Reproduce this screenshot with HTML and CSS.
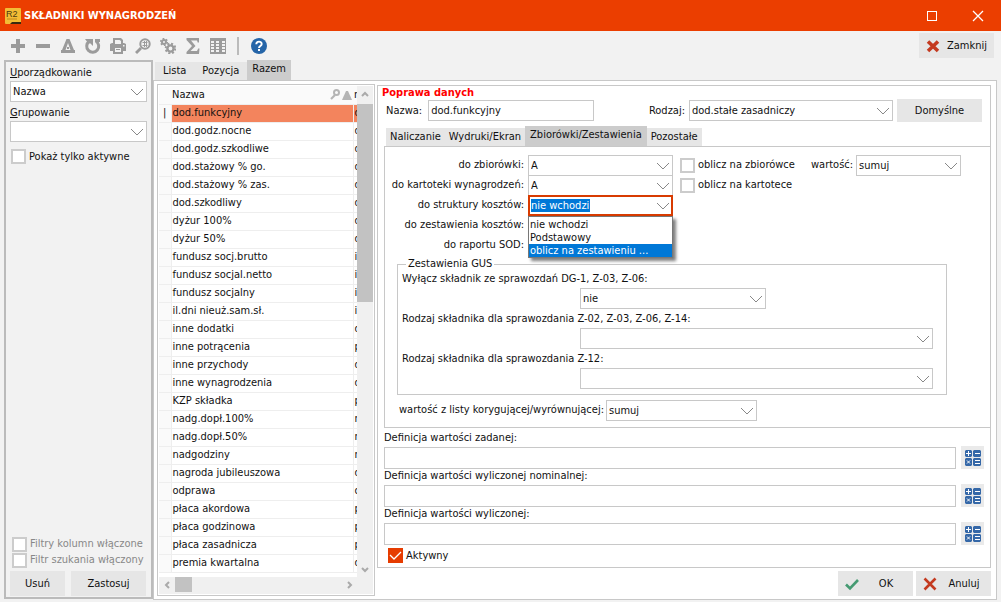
FILE: index.html
```html
<!DOCTYPE html>
<html lang="pl">
<head>
    <meta charset="UTF-8">
    <meta name="viewport" content="width=device-width, initial-scale=1.0">
    <title>Składniki wynagrodzeń</title>
    <link rel="stylesheet" href="styles.css">
</head>
<body>
    <header class="titlebar">
        <svg class="app-icon" viewBox="0 0 16 16">
            <rect width="16" height="16" rx="1" fill="#f3bc35"/>
            <text x="1" y="9" font-size="9" fill="#4a3a10" font-family="Liberation Sans, sans-serif">R2</text>
            <path d="M2 11h10" stroke="#c08a1c"/>
            <path d="M7 14h9v2H5z" fill="#3a2a10"/>
        </svg>
        <h1>SKŁADNIKI WYNAGRODZEŃ</h1>
        <button class="win-btn" aria-label="Maksymalizuj"><svg width="12" height="12"><rect x="1.5" y="1.5" width="9" height="9" fill="none" stroke="#fff"/></svg></button>
        <button class="win-btn" aria-label="Zamknij okno"><svg width="12" height="12"><path d="M1 1l10 10M11 1L1 11" fill="none" stroke="#fff" stroke-width="1.3"/></svg></button>
    </header>

    <nav class="toolbar">
        <button class="tool" aria-label="Dodaj"><svg viewBox="0 0 16 16"><path d="M6 1h4v5h5v4h-5v5H6v-5H1V6h5z"/></svg></button>
        <button class="tool" aria-label="Usuń pozycję"><svg viewBox="0 0 16 16"><path d="M1 6h14v4H1z"/></svg></button>
        <button class="tool" aria-label="Popraw"><svg viewBox="0 0 16 16"><path fill-rule="evenodd" d="M6.500 1h3L14 12h1v3H1v-3h1zM8 5l-2.500 7h5z"/><path d="M7 9h2v2H7z"/></svg></button>
        <button class="tool" aria-label="Odśwież"><svg viewBox="0 0 16 16"><path d="M11 3.200A6 6 0 1 1 4 3.500" fill="none" stroke="#9b9b9b" stroke-width="3"/><path d="M0 1h8v7L5.500 5.500 3 5z"/><path d="M10 1h5v3h-5z"/></svg></button>
        <button class="tool" aria-label="Drukuj"><svg viewBox="0 0 16 16"><path fill-rule="evenodd" d="M3 0h8l2 2v3h1l2 1v7h-3v3H3v-3H0V6l2-1h1zM5 2v4h6V3L9.500 2zM5 10v4h6v-4zM13 7v1.500h1.500V7z"/><path d="M6 11h4v1H6z"/></svg></button>
        <button class="tool" aria-label="Szukaj"><svg viewBox="0 0 16 16"><circle cx="10" cy="6" r="4.700" fill="none" stroke="#9b9b9b" stroke-width="2"/><path d="M0 14l5-5 2 2-5 5zM9 3h1v6H9zM11 3h1v6h-1zM7.500 4h5v1h-5zM7.500 7h5v1h-5z"/></svg></button>
        <button class="tool" aria-label="Ustawienia"><svg viewBox="0 0 16 16"><circle cx="4" cy="4" r="2" fill="none" stroke="#9b9b9b" stroke-width="2"/><circle cx="4" cy="4" r="3.300" fill="none" stroke="#9b9b9b" stroke-width="1.600" stroke-dasharray="1.700 1.750"/><circle cx="10.500" cy="10.500" r="3.100" fill="none" stroke="#9b9b9b" stroke-width="2.400"/><circle cx="10.500" cy="10.500" r="4.800" fill="none" stroke="#9b9b9b" stroke-width="2" stroke-dasharray="2 1.770"/></svg></button>
        <button class="tool" aria-label="Suma"><svg viewBox="0 0 16 16"><path d="M1.500 0H14v4.500h-1.300L12 2.500H6L10.500 8 5.500 13H12l1.200-2.500h1.300L14 16H1.500v-2L7 8 1.500 2z"/></svg></button>
        <button class="tool" aria-label="Kolumny"><svg viewBox="0 0 16 16"><path fill-rule="evenodd" d="M0 0h16v16H0zM1 3v2h3V3zM1 6v2h3V6zM1 9v2h3V9zM1 12v2h3v-2zM6 3v2h3V3zM6 6v2h3V6zM6 9v2h3V9zM6 12v2h3v-2zM12 3v2h3V3zM12 6v2h3V6zM12 9v2h3V9zM12 12v2h3v-2z"/></svg></button>
        <span class="separator"></span>
        <button class="tool" aria-label="Pomoc"><svg viewBox="0 0 16 16"><circle cx="8" cy="8" r="8" fill="#2565a8"/><path d="M5.300 6.200C5.300 2.800 10.700 2.800 10.700 6c0 2-2.700 2-2.700 4" fill="none" stroke="#fff" stroke-width="1.900"/><path d="M7 11h2v2H7z" fill="#fff"/></svg></button>
        <button class="btn close-btn"><svg width="14" height="14" viewBox="0 0 14 14"><path d="M2 2.500l10 9.500M12 2.500L2 12" stroke="#c43a20" stroke-width="3.600"/></svg><span>Zamknij</span></button>
    </nav>

    <div class="workspace">
        <aside class="filters">
            <label for="order"><u>U</u>porządkowanie</label>
            <select id="order"><option>Nazwa</option></select>
            <label for="group"><u>G</u>rupowanie</label>
            <select id="group"><option></option></select>
            <label class="check"><input type="checkbox">Pokaż tylko aktywne</label>
            <div class="filters-bottom">
                <label class="check disabled"><input type="checkbox" disabled>Filtry kolumn włączone</label>
                <label class="check disabled"><input type="checkbox" disabled>Filtr szukania włączony</label>
                <div class="filter-buttons">
                    <button class="btn">Usuń</button>
                    <button class="btn wide">Zastosuj</button>
                </div>
            </div>
        </aside>

        <main class="main">
            <div class="tabs">
                <button class="tab">Lista</button>
                <button class="tab">Pozycja</button>
                <button class="tab active">Razem</button>
            </div>
            <div class="content">
                <section class="list">
                    <div class="list-view">
                        <table>
                            <thead>
                                <tr><th class="mark"></th><th class="name"><div class="head"><span>Nazwa</span><svg width="22" height="12" viewBox="0 0 22 12"><circle cx="6.500" cy="3.500" r="2.500" fill="none" stroke="#b5b5b5" stroke-width="2"/><path d="M1 10l4-4" stroke="#b5b5b5" stroke-width="2.200"/><path d="M16 2h2l4 9H12z" fill="#b5b5b5"/></svg></div></th><th class="type">n</th></tr>
                            </thead>
                            <tbody>
                                <tr class="selected"><td class="mark">|</td><td>dod.funkcyjny</td><td>d</td></tr>
                                <tr><td></td><td>dod.godz.nocne</td><td>d</td></tr>
                                <tr><td></td><td>dod.godz.szkodliwe</td><td>d</td></tr>
                                <tr><td></td><td>dod.stażowy % go.</td><td>d</td></tr>
                                <tr><td></td><td>dod.stażowy % zas.</td><td>d</td></tr>
                                <tr><td></td><td>dod.szkodliwy</td><td>d</td></tr>
                                <tr><td></td><td>dyżur 100%</td><td>d</td></tr>
                                <tr><td></td><td>dyżur 50%</td><td>d</td></tr>
                                <tr><td></td><td>fundusz socj.brutto</td><td>i</td></tr>
                                <tr><td></td><td>fundusz socjal.netto</td><td>i</td></tr>
                                <tr><td></td><td>fundusz socjalny</td><td>i</td></tr>
                                <tr><td></td><td>il.dni nieuż.sam.sł.</td><td>i</td></tr>
                                <tr><td></td><td>inne dodatki</td><td>d</td></tr>
                                <tr><td></td><td>inne potrącenia</td><td>p</td></tr>
                                <tr><td></td><td>inne przychody</td><td>d</td></tr>
                                <tr><td></td><td>inne wynagrodzenia</td><td>d</td></tr>
                                <tr><td></td><td>KZP składka</td><td>p</td></tr>
                                <tr><td></td><td>nadg.dopł.100%</td><td>n</td></tr>
                                <tr><td></td><td>nadg.dopł.50%</td><td>n</td></tr>
                                <tr><td></td><td>nadgodziny</td><td>n</td></tr>
                                <tr><td></td><td>nagroda jubileuszowa</td><td>d</td></tr>
                                <tr><td></td><td>odprawa</td><td>o</td></tr>
                                <tr><td></td><td>płaca akordowa</td><td>p</td></tr>
                                <tr><td></td><td>płaca godzinowa</td><td>p</td></tr>
                                <tr><td></td><td>płaca zasadnicza</td><td>p</td></tr>
                                <tr><td></td><td>premia kwartalna</td><td>d</td></tr>
                            </tbody>
                        </table>
                        <div class="vscroll">
                            <svg width="16" height="16"><path d="M5 10l3-3 3 3"/></svg>
                            <div class="thumb"></div>
                            <svg class="end" width="16" height="16"><path d="M5 7l3 3 3-3"/></svg>
                        </div>
                    </div>
                    <div class="hscroll">
                        <svg width="16" height="16"><path d="M10 5L7 8l3 3"/></svg>
                        <div class="thumb"></div>
                        <svg class="end" width="16" height="16"><path d="M7 5l3 3-3 3"/></svg>
                    </div>
                </section>

                <section class="edit">
                    <form class="form">
                        <h2>Poprawa danych</h2>
                        <div class="top-row">
                            <label for="name">Nazwa:</label>
                            <input type="text" class="name-input" id="name" value="dod.funkcyjny">
                            <label class="push" for="kind">Rodzaj:</label>
                            <select class="kind" id="kind"><option>dod.stałe zasadniczy</option></select>
                            <button type="button" class="btn default-btn">Domyślne</button>
                        </div>
                        <div class="tabs inner">
                            <button type="button" class="tab">Naliczanie</button>
                            <button type="button" class="tab">Wydruki/Ekran</button>
                            <button type="button" class="tab active">Zbiorówki/Zestawienia</button>
                            <button type="button" class="tab">Pozostałe</button>
                        </div>
                        <div class="panel">
                            <div class="row">
                                <label class="lead" for="f1">do zbiorówki:</label>
                                <select class="short" id="f1"><option>A</option></select>
                                <label class="check"><input type="checkbox">oblicz na zbiorówce</label>
                                <label class="value-label" for="f2">wartość:</label>
                                <select class="value" id="f2"><option>sumuj</option></select>
                            </div>
                            <div class="row">
                                <label class="lead" for="f3">do kartoteki wynagrodzeń:</label>
                                <select class="short" id="f3"><option>A</option></select>
                                <label class="check"><input type="checkbox">oblicz na kartotece</label>
                            </div>
                            <div class="row">
                                <label class="lead" for="f4">do struktury kosztów:</label>
                                <div class="dropdown">
                                    <select class="short focused" id="f4"><option>nie wchodzi</option></select>
                                    <ul class="options" role="listbox">
                                        <li role="option">nie wchodzi</li>
                                        <li role="option">Podstawowy</li>
                                        <li role="option" class="current">oblicz na zestawieniu ...</li>
                                    </ul>
                                </div>
                            </div>
                            <div class="row"><span class="lead">do zestawienia kosztów:</span></div>
                            <div class="row"><span class="lead">do raportu SOD:</span></div>
                            <fieldset>
                                <legend>Zestawienia GUS</legend>
                                <label for="g1">Wyłącz składnik ze sprawozdań DG-1, Z-03, Z-06:</label>
                                <select class="half" id="g1"><option>nie</option></select>
                                <label for="g2">Rodzaj składnika dla sprawozdania Z-02, Z-03, Z-06, Z-14:</label>
                                <select id="g2"><option></option></select>
                                <label for="g3">Rodzaj składnika dla sprawozdania Z-12:</label>
                                <select id="g3"><option></option></select>
                            </fieldset>
                            <div class="row last">
                                <label for="f5">wartość z listy korygującej/wyrównującej:</label>
                                <select class="list-value" id="f5"><option>sumuj</option></select>
                            </div>
                        </div>
                        <div class="definitions">
                            <label for="d1">Definicja wartości zadanej:</label>
                            <div class="definition">
                                <input type="text" id="d1">
                                <button type="button" class="calc" aria-label="Kalkulator"><svg width="16" height="16"><use href="#calc"/></svg></button>
                            </div>
                            <label for="d2">Definicja wartości wyliczonej nominalnej:</label>
                            <div class="definition">
                                <input type="text" id="d2">
                                <button type="button" class="calc" aria-label="Kalkulator"><svg width="16" height="16"><use href="#calc"/></svg></button>
                            </div>
                            <label for="d3">Definicja wartości wyliczonej:</label>
                            <div class="definition">
                                <input type="text" id="d3">
                                <button type="button" class="calc" aria-label="Kalkulator"><svg width="16" height="16"><use href="#calc"/></svg></button>
                            </div>
                            <label class="check active-check"><input type="checkbox" checked>Aktywny</label>
                        </div>
                    </form>
                    <div class="actions">
                        <button class="btn"><svg width="14" height="14" viewBox="0 0 14 14"><path d="M1 7.500l4 4L13 3" fill="none" stroke="#459a72" stroke-width="2.600"/></svg><span>OK</span></button>
                        <button class="btn"><svg width="14" height="14" viewBox="0 0 14 14"><path d="M1.500 1.500l11 11M12.500 1.500l-11 11" stroke="#c43a20" stroke-width="2.600"/></svg><span>Anuluj</span></button>
                    </div>
                </section>
            </div>
        </main>
    </div>

    <svg class="sprite">
        <symbol id="calc" viewBox="0 0 16 16">
            <path fill="#3568a8" d="M1 0h5l1 1v5l-1 1H1L0 6V1zM9 0h6l1 1v5l-1 1H9L8 6V1zM1 8h5l1 1v6l-1 1H1l-1-1V9zM9 8h6l1 1v6l-1 1H9l-1-1V9z"/>
            <path fill="none" stroke="#fff" d="M1 3.500h5M3.500 1v5M10 3.500h5M2 10.500l3 3M5 10.500l-3 3M10 10.500h5M10 13.500h5"/>
        </symbol>
    </svg>
</body>
</html>
```
FILE: styles.css
```css
* {
    box-sizing: border-box;
}
body {
    display: flex;
    flex-direction: column;
    min-height: 100vh;
    margin: 0;
    background-color: #f2f2f2;
    color: #111;
    font-family: Tahoma, "DejaVu Sans Condensed", "Noto Sans", sans-serif;
    font-size: 11px;
    line-height: 14px;
    white-space: nowrap;
}
button, input, select {
    font: inherit;
    color: inherit;
    margin: 0;
}
button {
    padding: 0;
    border: none;
    background: none;
}
h1, h2 {
    margin: 0;
    font-size: 11px;
}

/* title bar and toolbar */
.titlebar {
    display: flex;
    align-items: center;
    height: 31px;
    padding-left: 5px;
    background-color: #eb3e00;
    color: #fff;
}
.titlebar h1 {
    flex: 1;
    margin-left: 3px;
}
.app-icon {
    width: 16px;
    height: 16px;
}
.win-btn {
    display: flex;
    align-items: center;
    justify-content: center;
    width: 46px;
    height: 31px;
}
.toolbar {
    display: flex;
    align-items: center;
    height: 29px;
    padding: 0 7px 0 5px;
}
.tool {
    display: flex;
    align-items: center;
    justify-content: center;
    width: 25px;
    height: 25px;
}
.tool svg {
    width: 16px;
    height: 16px;
    fill: #9b9b9b;
}
.separator {
    width: 2px;
    height: 18px;
    margin: 0 7px;
    background-color: #bbb;
}
.btn {
    display: flex;
    align-items: center;
    justify-content: center;
    height: 25px;
    min-width: 55px;
    background-color: #e6e6e6;
}
.btn.wide, .close-btn, .actions .btn {
    width: 75px;
}
.btn svg {
    margin-left: 7px;
}
.btn span {
    flex: 1;
    text-align: center;
}
.close-btn {
    margin-left: auto;
}

/* fields */
input[type="text"], select {
    height: 21px;
    padding: 0 2px;
    border: 1px solid #c8c8c8;
    border-radius: 0;
    background-color: #fff;
    outline: none;
}
select {
    appearance: none;
    background-image: url("data:image/svg+xml,%3Csvg xmlns='http://www.w3.org/2000/svg' width='14' height='8'%3E%3Cpath d='M1 1l6 6 6-6' fill='none' stroke='%23888'/%3E%3C/svg%3E");
    background-repeat: no-repeat;
    background-position: right 2px center;
}
.check {
    display: flex;
    align-items: center;
    gap: 3px;
}
input[type="checkbox"] {
    appearance: none;
    width: 15px;
    height: 15px;
    border: 2px solid #ccc;
    background-color: #fff;
}
input[type="checkbox"]:checked {
    border: none;
    background: #e63c00 url("data:image/svg+xml,%3Csvg xmlns='http://www.w3.org/2000/svg' width='15' height='15'%3E%3Cpath d='M2 7l4 4 7-7' fill='none' stroke='%23fff' stroke-width='1.300'/%3E%3C/svg%3E");
}

/* left side */
.workspace {
    display: flex;
    flex: 1;
    padding: 0 4px 2px;
}
.filters {
    display: flex;
    flex-direction: column;
    width: 149px;
    margin-bottom: 1px;
    padding: 4px 4px 1px;
    border: 2px solid #bbb;
}
.filters > label {
    height: 15px;
}
.filters > select {
    margin-bottom: 4px;
}
.filters .check {
    margin-left: 1px;
}
.filters > .check {
    margin-top: 3px;
}
.filters-bottom {
    margin-top: auto;
}
.filters-bottom .check {
    height: 16px;
    margin-left: 2px;
}
.disabled {
    color: #888;
}
.filter-buttons {
    display: flex;
    gap: 6px;
    margin-top: 3px;
}

/* tabs */
.main {
    display: flex;
    flex-direction: column;
    flex: 1;
    min-width: 0;
}
.tabs {
    display: flex;
    align-items: flex-end;
    height: 20px;
    padding-left: 2px;
}
.tab {
    height: 18px;
    padding: 0 8px;
    background-color: #e6e6e6;
}
.tab.active {
    height: 20px;
    padding: 0 5px 2px;
    background-color: #ccc;
}
.content {
    display: flex;
    flex: 1;
    padding: 3px 5px 3px 3px;
    gap: 2px;
    border: 1px solid #c8c8c8;
    background-color: #fff;
}

/* list */
.list {
    display: flex;
    flex-direction: column;
    width: 218px;
    padding: 1px;
    border: 1px solid #c8c8c8;
}
.list-view {
    display: flex;
    flex: 1;
}
table {
    flex: 1;
    width: 0;
    align-self: flex-start;
    table-layout: fixed;
    border-collapse: collapse;
}
th, td {
    height: 18px;
    padding: 0 1px;
    overflow: hidden;
    text-align: left;
    font-weight: normal;
    border-right: 1px solid #eee;
    border-bottom: 1px solid #eee;
}
th {
    background-color: #fafafa;
    border-right: none;
}
th:last-child, td:last-child {
    border-right: none;
}
.mark {
    width: 12px;
    text-align: center;
}
td:first-child {
    background-color: #fafafa;
}
.type {
    width: 4px;
}
.head {
    display: flex;
    justify-content: space-between;
    align-items: center;
}
.selected td:not(.mark) {
    background-color: #f3845d;
}
.vscroll, .hscroll {
    display: flex;
    background-color: #f0f0f0;
}
.vscroll {
    flex-direction: column;
    width: 16px;
}
.hscroll {
    height: 17px;
    padding-right: 16px;
}
.vscroll path, .hscroll path {
    fill: none;
    stroke: #aaa;
    stroke-width: 2;
}
.thumb {
    background-color: #c2c2c2;
}
.vscroll .thumb {
    height: 198px;
    margin-top: 2px;
}
.hscroll .thumb {
    width: 17px;
    height: 15px;
}
.vscroll .end {
    margin-top: auto;
}
.hscroll .end {
    margin-left: auto;
}

/* edit form */
.edit {
    display: flex;
    flex-direction: column;
    flex: 1;
    min-width: 0;
}
.form {
    display: flex;
    flex-direction: column;
    flex: 1;
    margin-top: 1px;
    border: 1px solid #c8c8c8;
}
.form h2 {
    height: 13px;
    padding-left: 4px;
    line-height: 13px;
    color: #f00;
}
.top-row {
    display: flex;
    align-items: center;
    height: 23px;
    padding: 0 8px;
    gap: 4px;
}
.name-input {
    width: 166px;
    margin-left: 2px;
}
.push {
    margin-left: auto;
}
.kind {
    width: 204px;
}
.default-btn {
    width: 85px;
    height: 23px;
}
.inner {
    height: 24px;
    padding-left: 8px;
}
.inner .tab {
    padding: 0 4px;
}
.inner .active {
    padding: 0 5px 2px;
}
.panel {
    margin-left: 6px;
    padding: 8px 0 7px;
    border: 1px solid #c8c8c8;
    border-right: none;
}
.row {
    display: flex;
    align-items: center;
    height: 20px;
}
.row select {
    margin-bottom: -1px;
}
.lead {
    width: 139px;
    margin-right: 4px;
    text-align: right;
}
.short {
    width: 145px;
}
.row .check {
    width: 123px;
    margin-left: 7px;
}
.value-label {
    margin-left: 8px;
    margin-right: 3px;
}
.value {
    width: 105px;
}
.dropdown {
    position: relative;
}
.focused {
    display: block;
    padding: 0 1px;
    border: 2px solid #d83b01;
    background-image: url("data:image/svg+xml,%3Csvg xmlns='http://www.w3.org/2000/svg' width='14' height='8'%3E%3Cpath d='M1 1l6 6 6-6' fill='none' stroke='%23888'/%3E%3C/svg%3E"), linear-gradient(#0078d7, #0078d7);
    background-position: right 1px center, 1px center;
    background-size: auto, 59px 13px;
    color: #fff;
}
.options {
    position: absolute;
    top: 21px;
    left: 0;
    z-index: 1;
    width: 145px;
    margin: 0;
    padding: 1px 0 0;
    border: 1px solid #777;
    background-color: #fff;
    box-shadow: 3px 3px 3px rgba(0, 0, 0, 0.5);
    list-style: none;
    line-height: 13px;
}
.options li {
    padding-left: 1px;
}
.options .current {
    background-color: #0078d7;
    color: #fff;
}
fieldset {
    display: flex;
    flex-direction: column;
    min-width: 0;
    margin: 2px 43px 0 12px;
    padding: 1px 13px 5px 4px;
    border: 1px solid #c8c8c8;
}
legend {
    height: 14px;
    margin-left: 4px;
    padding: 0 2px;
}
fieldset label {
    height: 16px;
}
fieldset select {
    margin-left: 178px;
    margin-bottom: 3px;
}
fieldset select:last-child {
    margin-bottom: 0;
}
.half {
    width: 186px;
}
.last {
    margin-top: 5px;
    padding-left: 14px;
}
.last label {
    margin-right: 2px;
}
.list-value {
    width: 151px;
}
.definitions {
    padding: 3px 6px 3px;
}
.definitions > label {
    display: block;
    height: 15px;
}
.definition {
    display: flex;
    align-items: center;
    gap: 5px;
    height: 23px;
}
.definition input {
    flex: 1;
    height: 22px;
}
.calc {
    display: flex;
    align-items: center;
    justify-content: center;
    width: 23px;
    height: 23px;
    background-color: #eaeaea;
}
.definitions .active-check {
    display: flex;
    margin: 3px 0 0 4px;
}
.actions {
    display: flex;
    justify-content: flex-end;
    gap: 3px;
    padding-top: 3px;
}
.sprite {
    position: absolute;
    width: 0;
    height: 0;
}
```
